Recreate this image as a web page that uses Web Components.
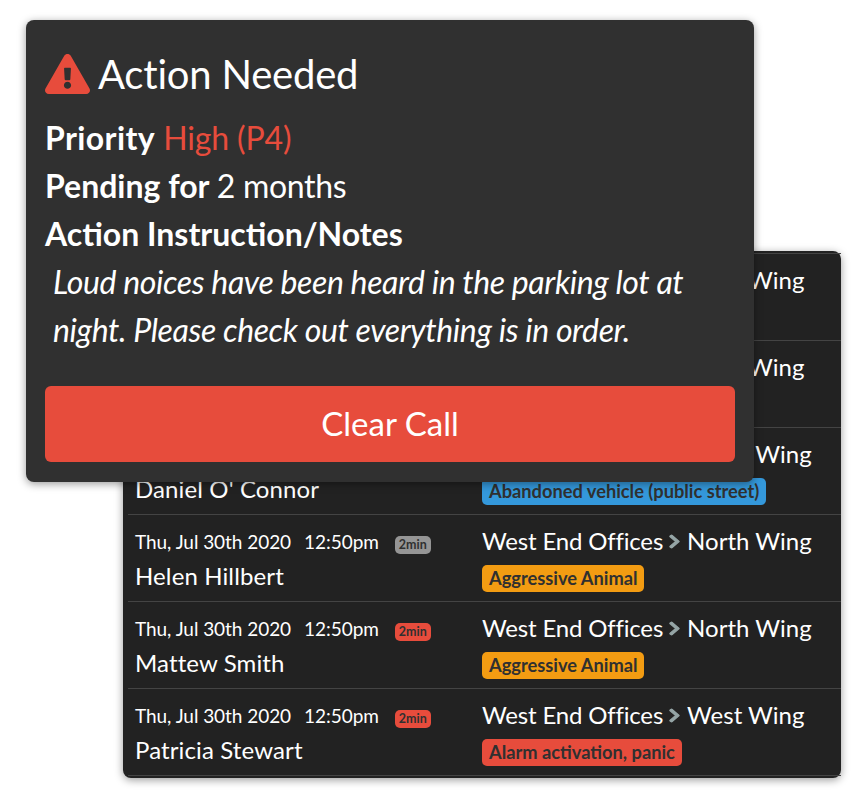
<!DOCTYPE html>
<html><head><meta charset="utf-8"><title>Action Needed</title>
<style>
html,body{margin:0;padding:0;background:#fff}
body{font-family:Lato,"Liberation Sans",sans-serif;width:859px;height:797px;overflow:hidden;position:relative}
</style></head><body>
<call-list>
  <call-row location="West Wing"></call-row>
  <call-row location="West Wing"></call-row>
  <call-row name="Daniel O' Connor" location="North Wing" tag="Abandoned vehicle (public street)" tone="blue"></call-row>
  <call-row date="Thu, Jul 30th 2020" time="12:50pm" age="2min" agetone="gray" name="Helen Hillbert" location="North Wing" tag="Aggressive Animal" tone="orange"></call-row>
  <call-row date="Thu, Jul 30th 2020" time="12:50pm" age="2min" agetone="red" name="Mattew Smith" location="North Wing" tag="Aggressive Animal" tone="orange"></call-row>
  <call-row date="Thu, Jul 30th 2020" time="12:50pm" age="2min" agetone="red" name="Patricia Stewart" location="West Wing" tag="Alarm activation, panic" tone="red"></call-row>
</call-list>
<alert-panel></alert-panel>
<script>
class CallList extends HTMLElement{
  constructor(){super();this.attachShadow({mode:'open'}).innerHTML=`<style>
  :host{display:block;margin:251px 0 0 123px;width:718px;box-sizing:border-box;height:527px;padding:2px 0 2px 5px;background:#222;border-radius:8px;box-shadow:0 2px 8px rgba(0,0,0,.4);color:#fff}
  </style><slot></slot>`}
}
class CallRow extends HTMLElement{
  constructor(){super();this.attachShadow({mode:'open'})}
  connectedCallback(){
    const a=n=>this.getAttribute(n)||'';
    const tones={blue:'#3498db',orange:'#f39c12',red:'#e74c3c'};
    const ages={gray:'#959595',red:'#e74c3c'};
    this.shadowRoot.innerHTML=`<style>
    :host{display:grid;grid-template-columns:347px 1fr;box-sizing:border-box;height:87px;padding:0 0 0 7px;border-top:1px solid #444;font-family:Lato,sans-serif}
    :host(:last-child){height:88px;border-bottom:1px solid #444}
    .l{display:flex;flex-direction:column;padding-top:12px}
    .r{display:flex;flex-direction:column;padding-top:11px}
    .d{display:flex;align-items:center;height:29px;font-size:19px;letter-spacing:-.05px;white-space:pre}
    .t{margin-left:13px}
    .b{margin-left:16px;margin-top:7px;height:18px;line-height:18px;padding:0 4px;border-radius:5px;font-size:12.5px;letter-spacing:0;font-weight:700;color:#303030;background:${ages[a('agetone')]||'transparent'}}
    .n{font-size:24px;letter-spacing:.12px;line-height:32px;margin-top:4px;white-space:nowrap}
    .loc{display:flex;align-items:center;height:29px;font-size:24px;letter-spacing:-.17px;white-space:pre}
    .loc svg{width:11px;height:15px;margin:2px 7px 0 6px;fill:#95a5a6;stroke:#95a5a6;stroke-width:36;flex:none}
    .loc span:last-child{letter-spacing:0}
    .tag{align-self:flex-start;margin-top:10px;height:27px;line-height:27px;padding:0 7px;border-radius:5px;font-size:18.25px;font-weight:700;color:#303030;white-space:nowrap;background:${tones[a('tone')]||'transparent'}}
    </style>
    <div class="l">
      <div class="d">${a('date')?`<span>${a('date')}</span><span class="t">${a('time')}</span><span class="b">${a('age')}</span>`:''}</div>
      ${a('name')?`<div class="n">${a('name')}</div>`:''}
    </div>
    <div class="r">
      <div class="loc"><span>West End Offices</span><svg viewBox="0 0 320 512" preserveAspectRatio="none"><path d="M285.476 272.971L91.078 467.369c-9.373 9.373-24.569 9.373-33.941 0l-22.667-22.667c-9.357-9.357-9.375-24.522-.04-33.901L188.505 256 34.43 101.199c-9.335-9.379-9.317-24.544.04-33.901l22.667-22.667c9.373-9.373 24.569-9.373 33.941 0L285.475 239.03c9.373 9.372 9.373 24.568.001 33.941z"/></svg><span>${a('location')}</span></div>
      ${a('tag')?`<span class="tag">${a('tag')}</span>`:''}
    </div>`;
  }
}
class AlertPanel extends HTMLElement{
  constructor(){super();this.attachShadow({mode:'open'}).innerHTML=`<style>
  :host{display:block;position:absolute;left:26px;top:20px;width:728px;height:462px;box-sizing:border-box;padding:29px 19px 20px;background:#303030;border-radius:8px;box-shadow:0 2px 8px rgba(0,0,0,.4);color:#fff;font-family:Lato,sans-serif;font-size:32px;line-height:48px}
  h1{display:flex;align-items:center;margin:0 0 15px;height:50px;font-size:40px;font-weight:400;letter-spacing:-.2px;line-height:50px}
  h1 svg{width:45px;height:40px;fill:#e74c3c;margin-right:8px;flex:none}
  b{font-weight:700}
  .pr{letter-spacing:.4px}
  .h{color:#e74c3c;letter-spacing:-.15px}
  .line{height:48px;white-space:nowrap}
  .mo{letter-spacing:-.3px;margin-left:-1px}
  .notes{font-style:italic;padding-left:8px;margin-bottom:32px;height:96px;letter-spacing:-.37px}
  button{display:block;width:100%;height:76px;border:0;border-radius:6px;background:#e74c3c;color:#fff;font:400 33px Lato,sans-serif;padding:0 0 2px}
  </style>
  <h1><svg viewBox="0 0 576 512"><path d="M569.517 440.013C587.975 472.007 564.806 512 527.94 512H48.054c-36.937 0-59.999-40.055-41.577-71.987L246.423 23.985c18.467-32.009 64.72-31.951 83.154 0l239.94 416.028zM288 354c-25.405 0-46 20.595-46 46s20.595 46 46 46 46-20.595 46-46-20.595-46-46-46zm-43.673-165.346l7.418 136c.347 6.364 5.609 11.346 11.982 11.346h48.546c6.373 0 11.635-4.982 11.982-11.346l7.418-136c.375-6.874-5.098-12.654-11.982-12.654h-63.383c-6.884 0-12.356 5.78-11.981 12.654z"/></svg>Action Needed</h1>
  <div class="line"><b class="pr">Priority</b> <span class="h">High (P4)</span></div>
  <div class="line"><b>Pending for</b> <span class="mo">2 months</span></div>
  <div class="line"><b>Action Instruction/Notes</b></div>
  <div class="notes">Loud noices have been heard in the parking lot at night. Please check out everything is in order.</div>
  <button>Clear Call</button>`}
}
customElements.define('call-list',CallList);
customElements.define('call-row',CallRow);
customElements.define('alert-panel',AlertPanel);
</script>
</body></html>
